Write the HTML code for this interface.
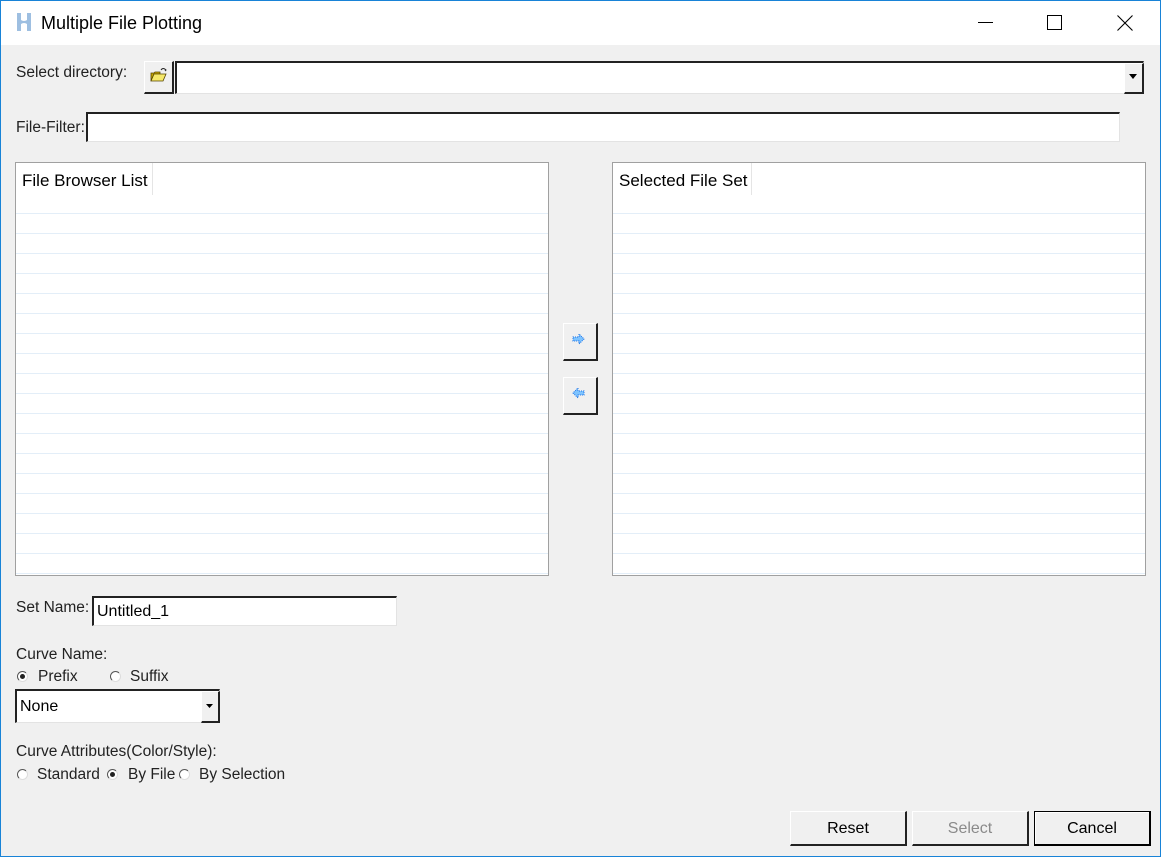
<!DOCTYPE html>
<html><head><meta charset="utf-8">
<style>
*{margin:0;padding:0;box-sizing:border-box}
body{width:1161px;height:857px;background:#f0f0f0;font-family:"Liberation Sans",Arial,sans-serif;font-size:15.5px;color:#000;position:relative;overflow:hidden}
.a{position:absolute}
.win{position:absolute;left:0;top:0;width:1161px;height:857px;border:1px solid #1883d7;border-top:none}
.title{left:0;top:0;width:1161px;height:45px;background:#fff;border-top:1px solid #1883d7}
.lbl{color:#222;font-size:15.5px}
.inset{background:#fff;border-top:2px solid #222;border-left:2px solid #222;border-right:1px solid #e3e3e3;border-bottom:1px solid #e3e3e3}
.raised{background:#f0f0f0;border-top:1px solid #fff;border-left:1px solid #fff;border-right:2px solid #222;border-bottom:2px solid #222}
.list{background:#fff;border:1px solid #a0a0a0;background-image:repeating-linear-gradient(to bottom,transparent 0,transparent 19px,#e3eef8 19px,#e3eef8 20px);background-position:0 31px}
.hdr{background:#fff;height:50px;position:absolute;left:0;top:0;right:0}
.hdr span{position:absolute;left:6px;top:8px;font-size:17px}
.hdr i{position:absolute;top:0;width:1px;height:32px;background:#e5e5e5}
.rad{width:11px;height:11px;border-radius:50%;background:#fff;border:1px solid #555;border-right-color:#ddd;border-bottom-color:#ddd}
.rad.on::after{content:"";position:absolute;left:2px;top:2px;width:5px;height:5px;border-radius:50%;background:#222}
.btn{text-align:center;line-height:33px;font-size:16px}
</style></head><body>
<div class="a title"></div>
<svg class="a" style="left:15px;top:12px" width="18" height="20" viewBox="0 0 18 20"><path d="M2 1h4v7q3 2 6 0V1h4v18h-4v-7q-3-2-6 0v7H2z" fill="#8db4dc" opacity=".85"/></svg>
<div class="a" style="left:41px;top:13px;font-size:18px">Multiple File Plotting</div>
<div class="a" style="left:978px;top:22px;width:15px;height:1px;background:#000"></div>
<div class="a" style="left:1047px;top:15px;width:15px;height:15px;border:1px solid #000"></div>
<svg class="a" style="left:1117px;top:15px" width="16" height="16"><path d="M0.5 0.5L15.5 15.5M15.5 0.5L0.5 15.5" stroke="#000" stroke-width="1.1"/></svg>

<div class="a lbl" style="left:16px;top:64px">Select directory:</div>
<div class="a raised" style="left:144px;top:61px;width:30px;height:33px"></div>
<svg class="a" style="left:150px;top:66px" width="18" height="18" viewBox="0 0 18 18"><path d="M1 7h3l1-1h5v2H4L1 15z" fill="#c8a800" stroke="#554400" stroke-width=".8"/><path d="M4 8h12l-3 7H1z" fill="#f5e86a" stroke="#554400" stroke-width=".8"/><path d="M11 4q2-3 5 0l-1 1" fill="none" stroke="#222" stroke-width="1"/></svg>
<div class="a inset" style="left:175px;top:61px;width:969px;height:33px"></div>
<div class="a raised" style="left:1124px;top:63px;width:20px;height:31px;border-left:1px solid #fff"></div>
<svg class="a" style="left:1129px;top:74px" width="9" height="6"><path d="M0 0h8L4 5z" fill="#000"/></svg>

<div class="a lbl" style="left:16px;top:119px">File-Filter:</div>
<div class="a inset" style="left:86px;top:112px;width:1034px;height:30px"></div>

<div class="a list" style="left:15px;top:162px;width:534px;height:414px"><div class="hdr"><span>File Browser List</span><i style="left:136px"></i></div></div>
<div class="a list" style="left:612px;top:162px;width:534px;height:414px"><div class="hdr"><span>Selected File Set</span><i style="left:138px"></i></div></div>

<div class="a raised" style="left:563px;top:323px;width:35px;height:38px"></div>
<svg class="a" style="left:572px;top:333px" width="14" height="12"><path d="M1 4h6V1l5 5-5 5V8H1z" fill="#7fc4ff" stroke="#1a73e8" stroke-width="1" stroke-dasharray="1 1"/></svg>
<div class="a raised" style="left:563px;top:377px;width:35px;height:38px"></div>
<svg class="a" style="left:571px;top:387px" width="14" height="12"><path d="M13 4H7V1L2 6l5 5V8h6z" fill="#7fc4ff" stroke="#1a73e8" stroke-width="1" stroke-dasharray="1 1"/></svg>

<div class="a lbl" style="left:16px;top:599px">Set Name:</div>
<div class="a inset" style="left:92px;top:596px;width:305px;height:30px"></div>
<div class="a" style="left:97px;top:603px;font-size:16px">Untitled_1</div>

<div class="a lbl" style="left:16px;top:646px">Curve Name:</div>
<div class="a rad on" style="left:17px;top:671px"></div><div class="a lbl" style="left:38px;top:668px">Prefix</div>
<div class="a rad" style="left:110px;top:671px"></div><div class="a lbl" style="left:130px;top:668px">Suffix</div>
<div class="a inset" style="left:15px;top:689px;width:205px;height:34px"></div>
<div class="a" style="left:20px;top:698px;font-size:16px">None</div>
<div class="a raised" style="left:201px;top:691px;width:19px;height:32px;border-left:1px solid #fff"></div>
<svg class="a" style="left:206px;top:704px" width="9" height="6"><path d="M0 0h7L3.5 4z" fill="#000"/></svg>

<div class="a lbl" style="left:16px;top:743px">Curve Attributes(Color/Style):</div>
<div class="a rad" style="left:17px;top:769px"></div><div class="a lbl" style="left:37px;top:766px">Standard</div>
<div class="a rad on" style="left:107px;top:769px"></div><div class="a lbl" style="left:128px;top:766px">By File</div>
<div class="a rad" style="left:179px;top:769px"></div><div class="a lbl" style="left:199px;top:766px">By Selection</div>

<div class="a raised btn" style="left:790px;top:811px;width:117px;height:35px">Reset</div>
<div class="a raised btn" style="left:912px;top:811px;width:117px;height:35px;color:#8a8a8a">Select</div>
<div class="a btn" style="left:1034px;top:811px;width:117px;height:35px;border:1px solid #000;border-right:2px solid #000;border-bottom:2px solid #000;box-shadow:inset 1px 1px 0 #fff">Cancel</div>
<div class="win"></div>
</body></html>
